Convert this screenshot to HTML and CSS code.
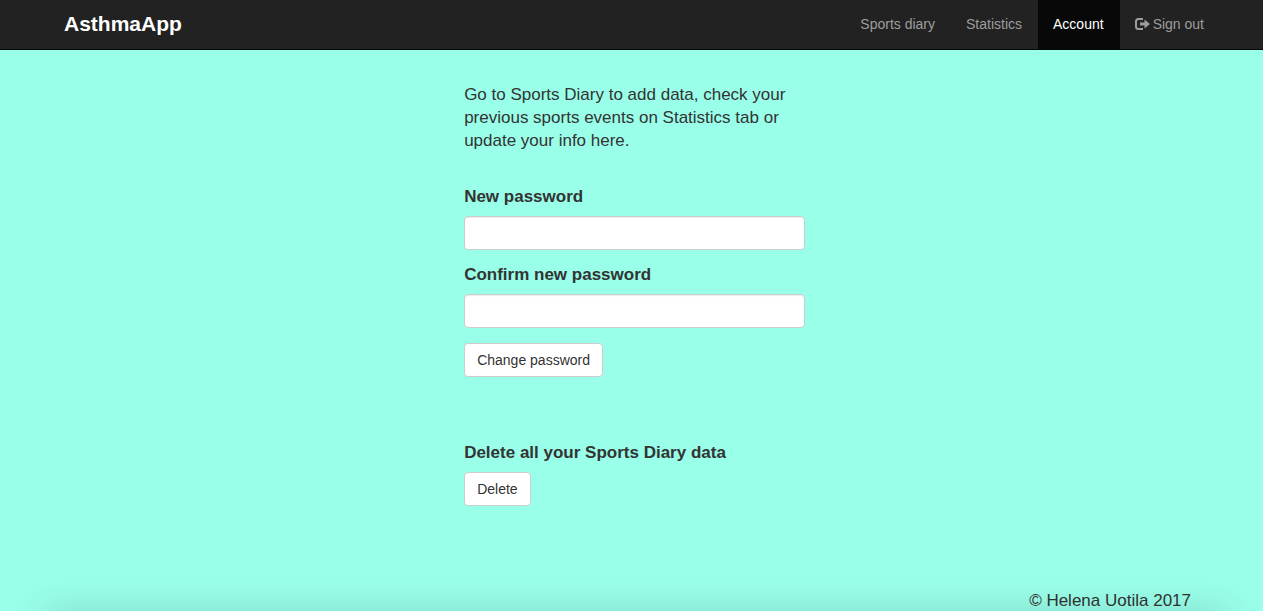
FILE: index.html
```html
<!DOCTYPE html>
<html lang="en">
<head>
<meta charset="utf-8">
<meta name="viewport" content="width=device-width, initial-scale=1">
<title>AsthmaApp</title>
<link rel="stylesheet" href="styles.css">
</head>
<body>
<header class="navbar">
  <a class="brand" href="#">AsthmaApp</a>
  <nav class="nav">
    <a class="nav-link" href="#">Sports diary</a>
    <a class="nav-link" href="#">Statistics</a>
    <a class="nav-link active" href="#" aria-current="page">Account</a>
    <a class="nav-link" href="#"><svg class="icon" viewBox="0 0 15 14" aria-hidden="true"><path d="M8 2H3.500Q1 2 1 4.500V9.500Q1 12 3.500 12H8" fill="none" stroke="currentColor" stroke-width="2"/><path d="M5 5.500H9.500V2.500L15 7L9.500 11.500V8.500H5Z" fill="currentColor"/></svg>Sign out</a>
  </nav>
</header>
<main class="content">
  <p class="intro">Go to Sports Diary to add data, check your previous sports events on Statistics tab or update your info here.</p>
  <form class="form">
    <label class="label" for="new-password">New password</label>
    <input class="field" id="new-password" type="password">
    <label class="label" for="confirm-password">Confirm new password</label>
    <input class="field" id="confirm-password" type="password">
    <button class="button" type="button">Change password</button>
  </form>
  <section class="danger">
    <h2 class="label">Delete all your Sports Diary data</h2>
    <button class="button" type="button">Delete</button>
  </section>
</main>
<footer class="footer">© Helena Uotila 2017</footer>
<div class="bottom-shade"></div>
</body>
</html>
```
FILE: styles.css
```css
* { box-sizing: border-box; }
body {
  margin: 0;
  min-height: 100vh;
  display: flex;
  flex-direction: column;
  background: #99ffe9;
  color: #333;
  font: 16px/23px "Liberation Sans", Arial, sans-serif;
}
.navbar {
  display: flex;
  justify-content: space-between;
  padding: 0 43px 0 64px;
  background: #222;
  border-bottom: 1px solid #080808;
}
.brand {
  padding: 12px 0 14px;
  color: #fff;
  font-size: 21px;
  font-weight: bold;
  text-decoration: none;
}
.nav { display: flex; }
.nav-link {
  display: flex;
  align-items: center;
  gap: 3px;
  padding: 0 16px 1px 15px;
  color: #9d9d9d;
  font-size: 14px;
  text-decoration: none;
}
.nav-link.active {
  background: #080808;
  color: #fff;
}
.icon { width: 15px; height: 14px; }
.content {
  width: 27%;
  min-width: 280px;
  flex: 1;
  margin-left: 36.75%;
  padding-top: 33px;
}
.intro {
  margin: 0 0 33px;
  font-size: 17px;
}
.label {
  display: block;
  margin: 0 0 8px;
  font-size: 17px;
  font-weight: bold;
}
.field {
  display: block;
  width: 100%;
  height: 34px;
  margin: 0 0 13px;
  padding: 6px 12px;
  border: 1px solid #ccc;
  border-radius: 4px;
  background: #fff;
  box-shadow: inset 0 1px 1px rgba(0, 0, 0, 0.08);
  font: inherit;
}
.button {
  height: 34px;
  padding: 0 12px;
  border: 1px solid #ccc;
  border-radius: 4px;
  background: #fff;
  color: #333;
  font: 14px/20px "Liberation Sans", Arial, sans-serif;
}
.form .button { margin-top: 2px; }
.danger { margin-top: 64px; }
.footer {
  padding-right: 72px;
  font-size: 17px;
  line-height: 20px;
  text-align: right;
}
.bottom-shade {
  position: fixed;
  top: 100%;
  left: 44px;
  right: 34px;
  height: 60px;
  box-shadow: 0 4px 40px rgba(0, 0, 0, 0.18);
}
```
